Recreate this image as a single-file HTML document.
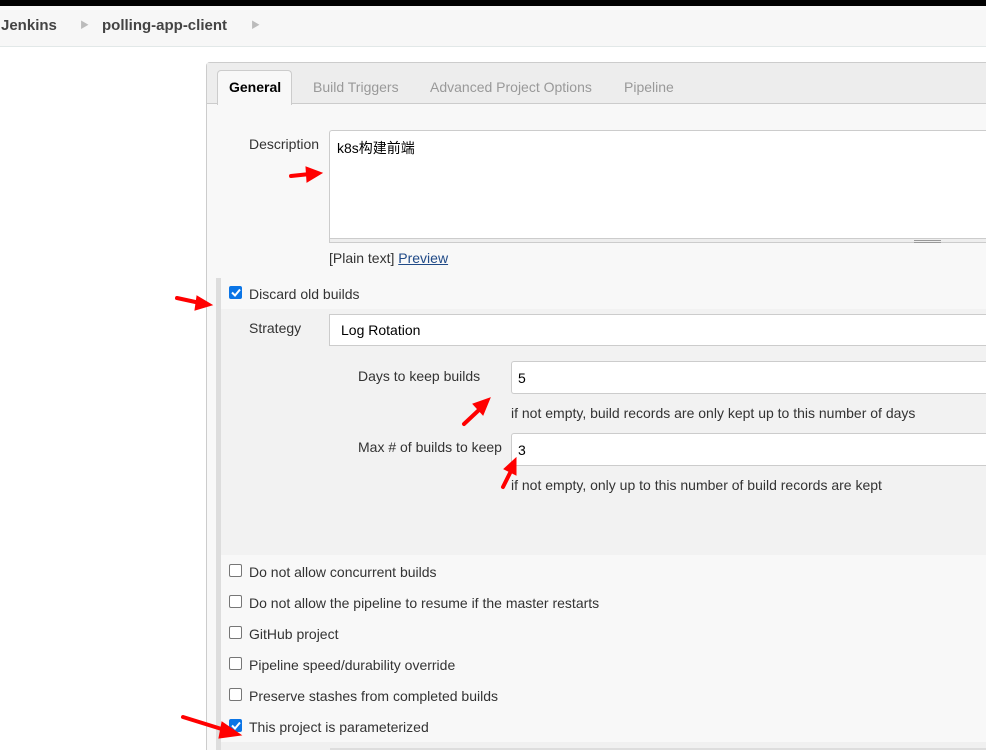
<!DOCTYPE html>
<html style="overflow:hidden;height:750px"><head><meta charset="utf-8"><style>
*{margin:0;padding:0;box-sizing:border-box}
body{width:986px;height:750px;overflow:hidden;background:#fff;font-family:"Liberation Sans","Noto Sans CJK SC",sans-serif;font-size:14px;color:#333;position:relative}
.a{position:absolute}
.cb{position:absolute;width:13px;height:13px;border:1px solid #767676;border-radius:2px;background:#fff}
.cb.on{background:#0b75e6;border-color:#0b75e6}
.lbl{position:absolute;font-size:14px;color:#333;white-space:nowrap}
.inp{position:absolute;background:#fff;border:1px solid #ccc;border-right:none}
</style></head><body>
<div class="a" style="left:0;top:0;width:986px;height:6px;background:#000"></div>
<div class="a" style="left:0;top:6px;width:986px;height:41px;background:#f7f7f7;border-bottom:1px solid #e2e8e8"></div>
<div class="lbl" style="left:1px;top:17px;font-weight:bold;font-size:15px;color:#444">Jenkins</div>
<div class="lbl" style="left:80px;top:18px;font-size:9px;color:#bbb">▶</div>
<div class="lbl" style="left:102px;top:17px;font-weight:bold;font-size:15px;color:#444">polling-app-client</div>
<div class="lbl" style="left:251px;top:18px;font-size:9px;color:#bbb">▶</div>

<div class="a" style="left:206px;top:62px;width:790px;height:688px;background:#f8f8f8;border:1px solid #ccc;border-bottom:none;border-radius:4px 0 0 0"></div>
<div class="a" style="left:207px;top:63px;width:779px;height:41px;background:#ededed;border-bottom:1px solid #ccc"></div>
<div class="a" style="left:217px;top:70px;width:75px;height:35px;background:#f8f8f8;border:1px solid #ccc;border-bottom:none;border-radius:4px 4px 0 0"></div>
<div class="lbl" style="left:229px;top:79px;font-weight:bold;color:#000">General</div>
<div class="lbl" style="left:313px;top:79px;color:#999">Build Triggers</div>
<div class="lbl" style="left:430px;top:79px;color:#999">Advanced Project Options</div>
<div class="lbl" style="left:624px;top:79px;color:#999">Pipeline</div>

<div class="lbl" style="left:249px;top:136px">Description</div>
<div class="inp" style="left:329px;top:130px;width:660px;height:109px;border-radius:3px 0 0 0"></div>
<div class="lbl" style="left:337px;top:138px;color:#000">k8s构建前端</div>
<div class="a" style="left:329px;top:238px;width:660px;height:5px;background:#eee;border:1px solid #ccc;border-right:none"></div>
<div class="a" style="left:914px;top:240px;width:27px;height:1px;background:#999"></div>
<div class="a" style="left:914px;top:242px;width:27px;height:1px;background:#999"></div>
<div class="lbl" style="left:329px;top:250px">[Plain text] <span style="color:#204a87;text-decoration:underline">Preview</span></div>

<div class="a" style="left:216px;top:278px;width:5px;height:472px;background:#ddd"></div>
<div class="a" style="left:221px;top:309px;width:765px;height:246px;background:#f2f2f2"></div>
<div class="cb on" style="left:229px;top:286px"></div>
<div class="lbl" style="left:249px;top:286px">Discard old builds</div>
<div class="lbl" style="left:249px;top:320px">Strategy</div>
<div class="inp" style="left:329px;top:314px;width:660px;height:32px"></div>
<div class="lbl" style="left:341px;top:322px;color:#000">Log Rotation</div>
<div class="lbl" style="left:358px;top:368px">Days to keep builds</div>
<div class="inp" style="left:511px;top:361px;width:480px;height:33px;border-radius:3px 0 0 3px"></div>
<div class="lbl" style="left:518px;top:370px;color:#000">5</div>
<div class="lbl" style="left:511px;top:405px">if not empty, build records are only kept up to this number of days</div>
<div class="lbl" style="left:358px;top:439px">Max # of builds to keep</div>
<div class="inp" style="left:511px;top:433px;width:480px;height:33px;border-radius:3px 0 0 3px"></div>
<div class="lbl" style="left:518px;top:442px;color:#000">3</div>
<div class="lbl" style="left:511px;top:477px">if not empty, only up to this number of build records are kept</div>

<div class="cb" style="left:229px;top:564px"></div><div class="lbl" style="left:249px;top:564px">Do not allow concurrent builds</div>
<div class="cb" style="left:229px;top:595px"></div><div class="lbl" style="left:249px;top:595px">Do not allow the pipeline to resume if the master restarts</div>
<div class="cb" style="left:229px;top:626px"></div><div class="lbl" style="left:249px;top:626px">GitHub project</div>
<div class="cb" style="left:229px;top:657px"></div><div class="lbl" style="left:249px;top:657px">Pipeline speed/durability override</div>
<div class="cb" style="left:229px;top:688px"></div><div class="lbl" style="left:249px;top:688px">Preserve stashes from completed builds</div>
<div class="cb on" style="left:229px;top:719px"></div><div class="lbl" style="left:249px;top:719px">This project is parameterized</div>
<div class="a" style="left:221px;top:742px;width:765px;height:8px;background:#f0f0f0"></div>
<div class="a" style="left:330px;top:748px;width:656px;height:2px;background:#ddd"></div>

<svg class="a" style="left:0;top:0" width="986" height="750">
<path d="M232 292.5l3 3 5-6" stroke="#fff" stroke-width="2" fill="none"/>
<path d="M232 725.5l3 3 5-6" stroke="#fff" stroke-width="2" fill="none"/>
<g fill="#f00" stroke="#f00" stroke-linecap="round">
<line x1="291" y1="176" x2="310" y2="174" stroke-width="4"/><polygon points="306,167 322,173 307,182"/>
<line x1="177" y1="298" x2="200" y2="303" stroke-width="4"/><polygon points="197,296 212,305 195,310"/>
<line x1="464" y1="424" x2="480" y2="409" stroke-width="4"/><polygon points="473,404 490,398 483,415"/>
<line x1="503" y1="487" x2="511" y2="471" stroke-width="4"/><polygon points="504,469 516,458 516,475"/>
<line x1="183" y1="717" x2="228" y2="731" stroke-width="4"/><polygon points="222,722 241,735 219,738"/>
</g>
</svg>
</body></html>
